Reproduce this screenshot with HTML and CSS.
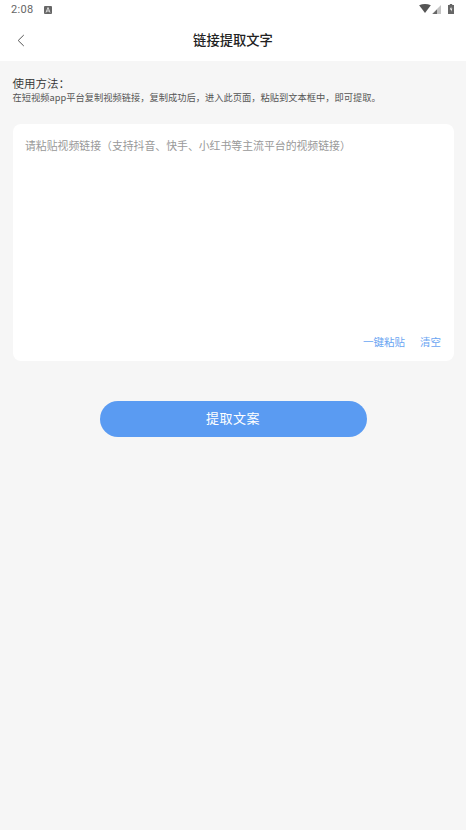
FILE: index.html
```
<!DOCTYPE html>
<html lang="zh-CN">
<head>
<meta charset="utf-8">
<title>链接提取文字</title>
<link rel="stylesheet" href="styles.css">
</head>
<body>
<div class="top">
  <div class="status">
    <div class="status-left">
      <span class="time">2:08</span>
      <svg class="a-icon" width="8" height="8" viewBox="0 0 8 8"><rect width="8" height="8" rx="1" fill="#666"/><path d="M2 6.5L4 1.5L6 6.5M2.8 5H5.2" stroke="#ddd" stroke-width="1" fill="none"/></svg>
    </div>
    <div class="status-right">
      <svg width="12" height="9" viewBox="0 0 13 10"><path d="M0 1.5Q6.5-1.5 13 1.5L6.5 10Z" fill="#555"/></svg>
      <svg width="10" height="10" viewBox="0 0 10 10"><path d="M9 1V10H0Z" fill="#c4c4c4"/><path d="M5 5.5V10H0.5Z" fill="#666"/></svg>
      <svg class="batt" width="6" height="10" viewBox="0 0 6 10"><path d="M1.8 0H4.2V1H6V10H0V1H1.8Z" fill="#666"/><path d="M3.4 2.5L1.8 5.6H3V7.8L4.3 4.6H3.1Z" fill="#fff"/></svg>
    </div>
  </div>
  <header class="nav">
    <svg class="back" width="8" height="13" viewBox="0 0 8 13"><path d="M6.8 1L1.2 6.5L6.8 12" stroke="#555" stroke-width="1" fill="none"/></svg>
    <h1 class="title">链接提取文字</h1>
  </header>
</div>
<main class="content">
  <section class="help">
    <p class="help-head">使用方法：</p>
    <p class="help-body">在短视频app平台复制视频链接，复制成功后，进入此页面，粘贴到文本框中，即可提取。</p>
  </section>
  <section class="card">
    <p class="placeholder">请粘贴视频链接（支持抖音、快手、小红书等主流平台的视频链接）</p>
    <div class="actions">
      <span>一键粘贴</span>
      <span>清空</span>
    </div>
  </section>
  <button class="submit" type="button">提取文案</button>
</main>
</body>
</html>
```
FILE: styles.css
```
* { box-sizing: border-box; }
html, body { margin: 0; padding: 0; }
body {
  width: 466px;
  height: 830px;
  overflow: hidden;
  background: #f6f6f6;
  font-family: "Noto Sans CJK SC", "Noto Sans", sans-serif;
}
p, h1 { margin: 0; font-weight: 400; }
.top { background: #fff; height: 61px; }
.status {
  height: 19px;
  padding: 0 11px;
  display: flex;
  justify-content: space-between;
  align-items: center;
}
.status-left { display: flex; align-items: center; gap: 11px; }
.time { font-family: Roboto, sans-serif; font-size: 11px; color: #666; letter-spacing: .3px; }
.a-icon { display: block; }
.status-right { display: flex; align-items: center; gap: 1px; margin-top: -2px; margin-right: 1px; }
.batt { margin-left: 5px; }
.nav {
  height: 42px;
  display: flex;
  align-items: center;
  justify-content: center;
  position: relative;
}
.back { position: absolute; left: 17px; top: 15px; }
.title { font-size: 13.3px; font-weight: 500; color: #222; line-height: 1; }
.content { padding: 0 12.5px; }
.help { padding-top: 14px; height: 63px; }
.help-head { font-size: 11.5px; line-height: 16px; color: #333; font-weight: 350; }
.help-body { font-size: 9.25px; line-height: 13px; color: #555; margin-top: 0; white-space: nowrap; }
.card {
  background: #fff;
  border-radius: 8px;
  height: 237px;
  padding: 13px 12.5px 12px;
  display: flex;
  flex-direction: column;
  justify-content: space-between;
}
.placeholder { font-size: 10.87px; line-height: 16px; color: #999; white-space: nowrap; }
.actions {
  display: flex;
  justify-content: flex-end;
  gap: 15px;
  font-size: 10.5px;
  line-height: 15px;
  color: #6aa5f2;
}
.submit {
  display: block;
  width: 267px;
  height: 36px;
  margin: 40px auto 0;
  border: 0;
  border-radius: 18px;
  background: #5a9bf2;
  color: #fff;
  font-family: inherit;
  font-size: 13px;
  line-height: 34px;
  padding: 0 0 3px;
  letter-spacing: .5px;
}
```
